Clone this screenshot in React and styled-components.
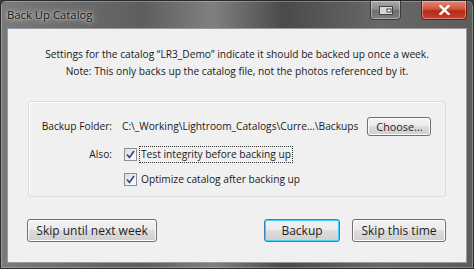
import React, { useState } from 'react';
import styled, { createGlobalStyle } from 'styled-components';

const Global = createGlobalStyle`
body {
  margin: 0;
  background: #3c3c3c;
  font-family: "Open Sans", "Noto Sans", "Liberation Sans", sans-serif;
}
`

const Window = styled.div`
width: 474px;
height: 269px;
box-sizing: border-box;
display: flex;
flex-direction: column;
padding: 0 6px 5px 6px;
border: 1px solid #2a2a2a;
border-radius: 6px 6px 0 0;
background: linear-gradient(90deg, #7a7a7a 0%, #5e5e5e 30%, #808080 45%, #4a4a4a 60%, #686868 80%, #5c5c5c 100%);
box-shadow: inset 0 0 0 1px rgba(255,255,255,0.25);
`

const TitleBar = styled.div`
height: 27px;
display: flex;
align-items: flex-start;
`

const Title = styled.div`
margin-top: 6px;
font-size: 11.3px;
color: #111;
text-shadow: 0 0 6px rgba(255,255,255,0.9), 0 0 2px rgba(255,255,255,0.7);
`

const Controls = styled.div`
margin-left: auto;
display: flex;
gap: 20px;
`

const CtrlButton = styled.div`
width: ${props => props.wide ? "46px" : "31px"};
height: 19px;
display: flex;
align-items: center;
justify-content: center;
box-sizing: border-box;
border: 1px solid ${props => props.red ? "#6b1e14" : "#3a3a3a"};
border-top: none;
border-radius: 0 0 4px 4px;
background: ${props => props.red
  ? "linear-gradient(#e08a78 0%, #d0533e 45%, #b52a14 55%, #c8422a 100%)"
  : "linear-gradient(#a8a8a8 0%, #8a8a8a 45%, #6e6e6e 55%, #808080 100%)"};
box-shadow: inset 0 0 0 1px rgba(255,255,255,0.35);
`

const Client = styled.div`
flex: 1;
display: flex;
flex-direction: column;
background: #f0f0f0;
border: 1px solid #9a9a9a;
font-size: 10.2px;
color: #1a1a1a;
`

const Message = styled.div`
text-align: center;
line-height: 17px;
padding-top: 17px;
height: 55px;
`

const GroupBox = styled.div`
margin: 0 20px;
height: 96px;
box-sizing: border-box;
border: 1px solid #dcdcdc;
border-radius: 3px;
box-shadow: inset 1px 1px 0 #fff;
display: grid;
grid-template-columns: 93px 1fr;
grid-auto-rows: min-content;
padding-top: 11px;
align-content: start;
`

const Label = styled.div`
text-align: right;
padding-right: 10px;
height: ${props => props.h};
line-height: ${props => props.h};
`

const Field = styled.div`
display: flex;
align-items: center;
height: ${props => props.h};
padding-left: ${props => props.indent || "0"};
`

const Path = styled.span`
white-space: nowrap;
`

const Button = styled.button`
font: inherit;
font-size: ${props => props.fs || "12px"};
color: #1e1e1e;
height: ${props => props.h || "23px"};
padding: 0;
width: ${props => props.w};
margin-left: ${props => props.ml || "0"};
box-sizing: border-box;
border: 1px solid ${props => props.active ? "#3c7fb1" : "#707070"};
border-radius: 3px;
background: linear-gradient(#f2f2f2 0%, #ebebeb 49%, #dddddd 50%, #cfcfcf 100%);
box-shadow: inset 0 0 0 1px ${props => props.active ? "#48d0f8" : "#fcfcfc"};
cursor: pointer;
`

const CheckRow = styled.label`
display: flex;
align-items: center;
gap: 3px;
cursor: pointer;
`

const Box = styled.span`
width: 13px;
height: 13px;
box-sizing: border-box;
border: 1px solid #8e8f8f;
background: linear-gradient(135deg, #dcdcdc, #fff);
display: flex;
align-items: center;
justify-content: center;
`

const CheckText = styled.span`
outline: ${props => props.focus ? "1px dotted #333" : "none"};
padding: 0 1px;
line-height: 15px;
`

const Footer = styled.div`
flex: 1;
display: flex;
align-items: center;
padding: 2px 20px 0 19px;
gap: 12px;
`

const Spacer = styled.div`
flex: 1;
`

function Check({ checked, onToggle, children, focus }) {
  return (
    <CheckRow onClick={onToggle}>
      <Box>
        {checked && (
          <svg width="9" height="9" viewBox="0 0 9 9">
            <path d="M1 4.5 L3.5 7.5 L8 1" fill="none" stroke="#2b3f8f" strokeWidth="1.6" />
          </svg>
        )}
      </Box>
      <CheckText focus={focus}>{children}</CheckText>
    </CheckRow>
  );
}

export default function App() {
  const [test, setTest] = useState(true);
  const [optimize, setOptimize] = useState(true);
  return (
    <>
      <Global />
      <Window>
        <TitleBar>
          <Title>Back Up Catalog</Title>
          <Controls>
            <CtrlButton>
              <svg width="14" height="9" viewBox="0 0 14 9">
                <rect x="0.5" y="0.5" width="13" height="8" fill="#d8d8d8" stroke="#444" />
                <rect x="8" y="3" width="4" height="3" fill="#fff" stroke="#444" />
              </svg>
            </CtrlButton>
            <CtrlButton wide red>
              <svg width="11" height="10" viewBox="0 0 11 10">
                <path d="M1.5 1 L9.5 9 M9.5 1 L1.5 9" stroke="#fff" strokeWidth="2.4" strokeLinecap="square" />
              </svg>
            </CtrlButton>
          </Controls>
        </TitleBar>
        <Client>
          <Message>
            Settings for the catalog “LR3_Demo” indicate it should be backed up once a week.<br />
            Note: This only backs up the catalog file, not the photos referenced by it.
          </Message>
          <GroupBox>
            <Label h="26px">Backup Folder:</Label>
            <Field h="26px">
              <Path>C:\_Working\Lightroom_Catalogs\Curre…\Backups</Path>
              <Button w="64px" h="19px" fs="10.8px" ml="9px">Choose...</Button>
            </Field>
            <Label h="31px">Also:</Label>
            <Field h="31px" indent="2px">
              <Check checked={test} onToggle={() => setTest(!test)} focus>Test integrity before backing up</Check>
            </Field>
            <Label h="18px"></Label>
            <Field h="18px" indent="2px">
              <Check checked={optimize} onToggle={() => setOptimize(!optimize)}>Optimize catalog after backing up</Check>
            </Field>
          </GroupBox>
          <Footer>
            <Button w="130px">Skip until next week</Button>
            <Spacer />
            <Button w="76px" active>Backup</Button>
            <Button w="94px">Skip this time</Button>
          </Footer>
        </Client>
      </Window>
    </>
  );
}
